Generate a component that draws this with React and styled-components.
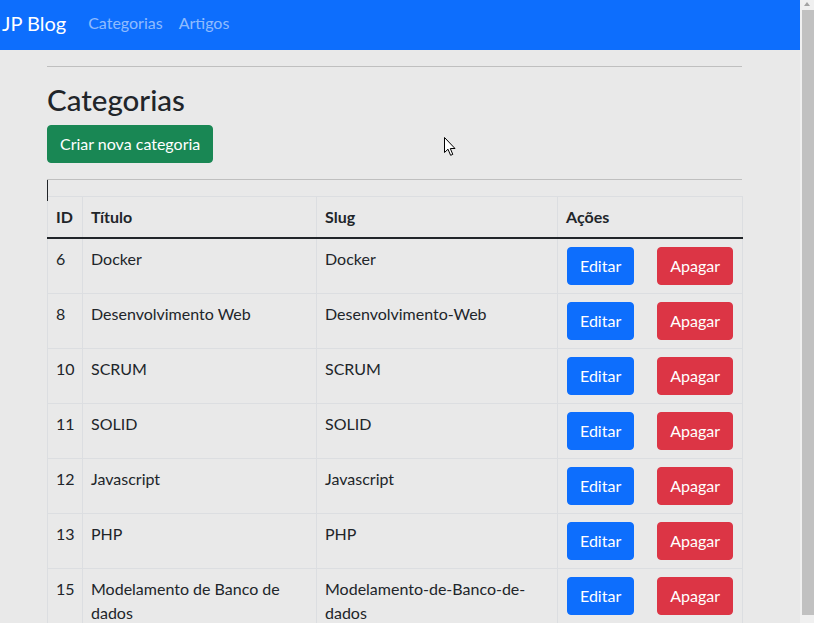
import React from "react";
import styled, { createGlobalStyle } from "styled-components";

const GlobalStyle = createGlobalStyle`
  html::-webkit-scrollbar { display: none; }
  body {
    margin: 0 14px 0 0;
    background: #e9e9e9;
    color: #212529;
    font-family: Lato, "Noto Sans", sans-serif;
    font-size: 16px;
    line-height: 1.5;
  }
  * { box-sizing: border-box; }
`;

const ScrollTrack = styled.aside`
  position: fixed;
  top: 0;
  right: 0;
  width: 14px;
  height: 100vh;
  background: #f0f0f0;
  z-index: 10;
`;

const ScrollArrow = styled.span`
  position: absolute;
  top: 2px;
  left: 4px;
  width: 0;
  height: 0;
  border-left: 3.5px solid transparent;
  border-right: 3.5px solid transparent;
  border-bottom: 4px solid #a3a3a3;
`;

const ScrollThumb = styled.span`
  position: absolute;
  top: 10px;
  bottom: 8px;
  left: 2px;
  right: 0;
  background: #c1c1c1;
`;

const Navbar = styled.nav`
  height: 50px;
  background: #0d6efd;
  display: flex;
  align-items: center;
  padding: 0 0 4px 2px;
`;

const Brand = styled.a`
  color: #fff;
  font-size: 20px;
  margin-right: 14px;
  text-decoration: none;
  line-height: 30px;
`;

const NavLink = styled.a`
  color: rgba(255, 255, 255, 0.55);
  padding: 0 8px;
  font-size: 16px;
  line-height: 24px;
  text-decoration: none;
`;

const Container = styled.main`
  position: relative;
  width: 695px;
  margin: 0 0 0 47px;
  padding-top: 16px;
  padding-bottom: 16px;
`;

const Rule = styled.hr`
  margin: 0;
  border: 0;
  border-top: 1px solid #bfbfbf;
`;

const Title = styled.h2`
  font-size: 29.5px;
  font-weight: 500;
  line-height: 34px;
  margin: 16px 0 8px;
`;

const Button = styled.button`
  font-family: inherit;
  font-size: 16px;
  line-height: 24px;
  padding: 6px 12px;
  height: 38px;
  border: 1px solid ${(p) => p.$bg};
  border-radius: 4px;
  background: ${(p) => p.$bg};
  color: #fff;
  cursor: pointer;
`;

const CreateButton = styled(Button)`
  margin-bottom: 16px;
`;

const Caret = styled.span`
  position: absolute;
  left: 0;
  top: 130px;
  width: 1px;
  height: 21px;
  background: #212529;
`;

const Table = styled.table`
  width: 100%;
  margin-top: 16px;
  border-collapse: collapse;
  table-layout: fixed;
`;

const Th = styled.th`
  text-align: left;
  font-weight: 700;
  padding: 8px;
  border: 1px solid #dcdee1;
  border-bottom: 2px solid #212529;
  vertical-align: bottom;
  line-height: 24px;
`;

const Td = styled.td`
  padding: 8px;
  border: 1px solid #dcdee1;
  vertical-align: top;
  line-height: 24px;
`;

const Actions = styled.div`
  display: flex;
  gap: 23px;
  padding-left: 1px;
`;

const Cursor = styled.svg`
  position: absolute;
  left: 397px;
  top: 87px;
`;

const rows = [
  { id: 6, title: "Docker", slug: "Docker" },
  { id: 8, title: "Desenvolvimento Web", slug: "Desenvolvimento-Web" },
  { id: 10, title: "SCRUM", slug: "SCRUM" },
  { id: 11, title: "SOLID", slug: "SOLID" },
  { id: 12, title: "Javascript", slug: "Javascript" },
  { id: 13, title: "PHP", slug: "PHP" },
  { id: 15, title: "Modelamento de Banco de dados", slug: "Modelamento-de-Banco-de-dados" },
];

export default function App() {
  return (
    <>
      <GlobalStyle />
      <ScrollTrack>
        <ScrollArrow />
        <ScrollThumb />
      </ScrollTrack>
      <Navbar>
        <Brand href="#">JP Blog</Brand>
        <NavLink href="#">Categorias</NavLink>
        <NavLink href="#">Artigos</NavLink>
      </Navbar>
      <Container>
        <Rule />
        <Title>Categorias</Title>
        <CreateButton $bg="#198754">Criar nova categoria</CreateButton>
        <Rule />
        <Caret />
        <Cursor width="13" height="20" viewBox="0 0 13 20">
          <path
            d="M0.5 0.5 L0.5 15.5 L4 12.2 L6.6 18.3 L8.8 17.4 L6.3 11.5 L11 11.5 Z"
            fill="#fff"
            stroke="#000"
            strokeWidth="1"
            strokeLinejoin="miter"
          />
        </Cursor>
        <Table>
          <colgroup>
            <col style={{ width: 35 }} />
            <col style={{ width: 234 }} />
            <col style={{ width: 241 }} />
            <col style={{ width: 185 }} />
          </colgroup>
          <thead>
            <tr>
              <Th>ID</Th>
              <Th>Título</Th>
              <Th>Slug</Th>
              <Th>Ações</Th>
            </tr>
          </thead>
          <tbody>
            {rows.map((r) => (
              <tr key={r.id}>
                <Td>{r.id}</Td>
                <Td>{r.title}</Td>
                <Td>{r.slug}</Td>
                <Td>
                  <Actions>
                    <Button $bg="#0d6efd">Editar</Button>
                    <Button $bg="#dc3545">Apagar</Button>
                  </Actions>
                </Td>
              </tr>
            ))}
          </tbody>
        </Table>
      </Container>
    </>
  );
}
